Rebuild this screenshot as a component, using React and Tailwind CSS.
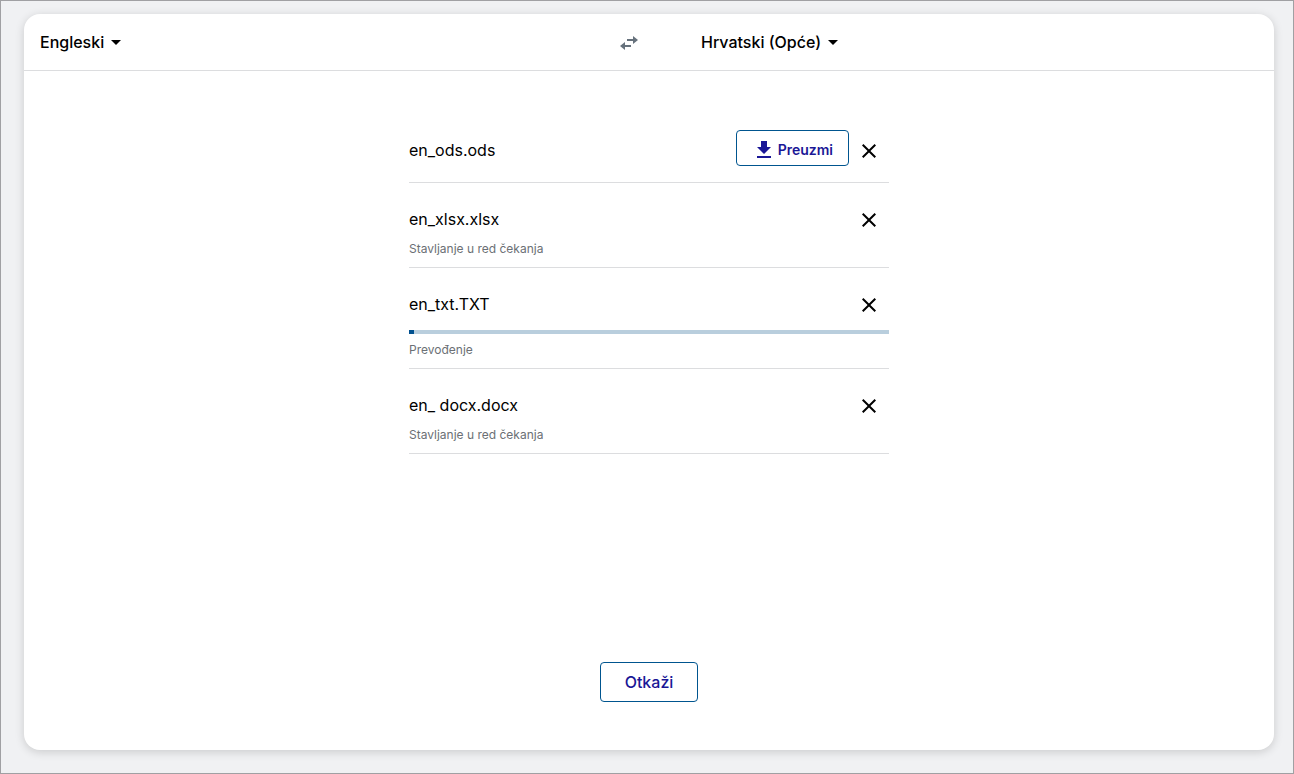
import React, { useState } from 'react';
import { MdArrowDropDown, MdClose } from 'react-icons/md';

const FILES = [
    { id: 1, name: 'en_ods.ods', status: 'done' },
    { id: 2, name: 'en_xlsx.xlsx', status: 'queued' },
    { id: 3, name: 'en_txt.TXT', status: 'translating', progress: 1 },
    { id: 4, name: 'en_ docx.docx', status: 'queued' },
];

const STATUS_TEXT = {
    queued: 'Stavljanje u red čekanja',
    translating: 'Prevođenje',
};

const LanguageButton = ({ label }) => (
    <button type="button" aria-haspopup="listbox" className="flex items-center font-medium text-black">
        {label}
        <MdArrowDropDown className="w-6 h-6" />
    </button>
);

const SwapIcon = () => (
    <svg viewBox="0 0 18 14" className="w-[18px] h-[14px]" fill="currentColor" aria-hidden="true">
        <path d="M18 4l-5-4v3H7v2h6v3z" />
        <path d="M0 10l5 4v-3h6V9H5V6z" />
    </svg>
);

const DownloadIcon = () => (
    <svg viewBox="0 0 14 17" className="w-[14px] h-[17px]" fill="currentColor" aria-hidden="true">
        <path d="M14 6h-4V0H4v6H0l7 7z" />
        <path d="M0 15h14v2H0z" />
    </svg>
);

const FileRow = ({ file, onRemove }) => (
    <li className={`pt-4 border-b border-[#dcdddf] ${file.status === 'done' ? 'pb-3' : 'pb-2'}`}>
        <div className="flex h-10">
            <span className="flex-1 leading-10 truncate">{file.name}</span>
            {file.status === 'done' && (
                <button
                    type="button"
                    className="flex items-center gap-[7px] h-9 pl-5 pr-[15px] pt-[3px] border border-[#00558f] rounded text-sm font-semibold text-[#1a1796]"
                >
                    <DownloadIcon />
                    Preuzmi
                </button>
            )}
            <button
                type="button"
                aria-label={`Ukloni ${file.name}`}
                onClick={() => onRemove(file.id)}
                className="flex items-center justify-center w-10 pt-0.5"
            >
                <MdClose className="w-6 h-6" />
            </button>
        </div>
        {file.status === 'translating' && (
            <div
                role="progressbar"
                aria-label={file.name}
                aria-valuenow={file.progress}
                aria-valuemin={0}
                aria-valuemax={100}
                className="h-1 my-1.5 bg-[#b9cedd]"
            >
                <div className="h-full bg-[#00508f]" style={{ width: `${file.progress}%` }}></div>
            </div>
        )}
        {STATUS_TEXT[file.status] && (
            <p className="text-xs leading-5 text-[#6b7075]">{STATUS_TEXT[file.status]}</p>
        )}
    </li>
);

export default function App() {
    const [files, setFiles] = useState(FILES);

    const removeFile = (id) => setFiles(files.filter((file) => file.id !== id));

    return (
        <div className="flex min-h-screen pt-[13px] pr-[19px] pb-[23px] pl-[23px] border border-[#a0a0a3] bg-[#f0f1f3] font-['Inter',sans-serif] text-base text-black">
            <main className="flex flex-col flex-1 rounded-2xl bg-white shadow-[0_2px_10px_rgba(0,0,0,0.16)]">
                {/* Language bar */}
                <header className="grid grid-cols-2 h-[57px] border-b border-[#dcdddf]">
                    <div className="flex items-center justify-between pl-4">
                        <LanguageButton label="Engleski" />
                        <button
                            type="button"
                            aria-label="Zamijeni jezike"
                            className="flex items-center justify-center w-10 h-10 pt-0.5 text-[#66717c]"
                        >
                            <SwapIcon />
                        </button>
                    </div>
                    <div className="flex items-center pl-[52px]">
                        <LanguageButton label="Hrvatski (Opće)" />
                    </div>
                </header>

                {/* Files */}
                <div className="flex flex-col flex-1 items-center px-4 pt-[43px] pb-12">
                    <ul className="w-full max-w-[480px]">
                        {files.map((file) => (
                            <FileRow key={file.id} file={file} onRemove={removeFile} />
                        ))}
                    </ul>
                    <button
                        type="button"
                        className="h-10 mt-auto px-6 border border-[#00558f] rounded font-medium text-[#1a1796]"
                    >
                        Otkaži
                    </button>
                </div>
            </main>
        </div>
    );
}
